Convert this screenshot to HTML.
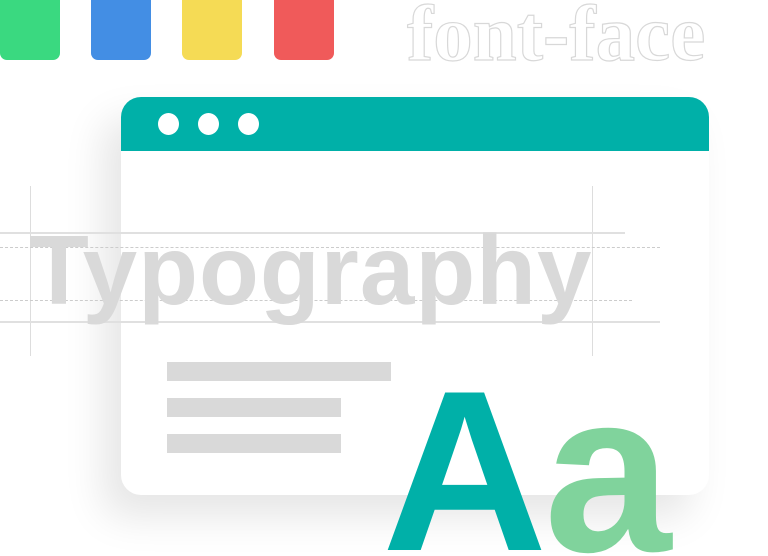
<!DOCTYPE html>
<html><head><meta charset="utf-8"><style>
html,body{margin:0;padding:0;width:768px;height:556px;overflow:hidden;background:#fff;position:relative}
.a{position:absolute}
.sq{position:absolute;top:-8px;width:60px;height:68px;border-radius:7px}
.t{position:absolute;white-space:nowrap;line-height:1}
#wrap{position:absolute;left:0;top:0;width:768px;height:556px;overflow:hidden}
</style></head><body><div id="wrap">
<div class="sq" style="left:0;background:#3ad980"></div>
<div class="sq" style="left:91px;background:#438ee4"></div>
<div class="sq" style="left:182px;background:#f5db55"></div>
<div class="sq" style="left:274px;background:#f05a5a"></div>
<div class="t" style="left:407px;top:-10px;font:bold 79px 'Liberation Serif',serif;color:#fff;-webkit-text-stroke:1.2px #d8d8d8">font-face</div>

<div class="a" style="left:121px;top:97px;width:588px;height:398px;border-radius:20px;background:#fff;box-shadow:-18px 22px 40px rgba(0,0,0,0.10)"></div>
<div class="a" style="left:121px;top:97px;width:588px;height:54px;border-radius:20px 20px 0 0;background:#00b0a8"></div>
<div class="a" style="left:158px;top:113px;width:21px;height:22px;border-radius:50%;background:#fff"></div>
<div class="a" style="left:198px;top:113px;width:21px;height:22px;border-radius:50%;background:#fff"></div>
<div class="a" style="left:238px;top:113px;width:21px;height:22px;border-radius:50%;background:#fff"></div>

<div class="a" style="left:167px;top:362px;width:224px;height:19px;background:#d9d9d9"></div>
<div class="a" style="left:167px;top:398px;width:174px;height:19px;background:#d9d9d9"></div>
<div class="a" style="left:167px;top:434px;width:174px;height:19px;background:#d9d9d9"></div>

<div class="a" style="left:30px;top:186px;width:1px;height:170px;background:#ddd"></div>
<div class="a" style="left:592px;top:186px;width:1px;height:170px;background:#ddd"></div>
<div class="a" style="left:0;top:232px;width:625px;height:2px;background:#e0e0e0"></div>
<div class="a" style="left:0;top:321px;width:660px;height:2px;background:#e0e0e0"></div>
<div class="a" style="left:0;top:247px;width:660px;height:0;border-top:1px dashed #ccc"></div>
<div class="a" style="left:0;top:300px;width:632px;height:0;border-top:1px dashed #ccc"></div>
<div class="t" style="left:29px;top:214px;font:bold 98px 'Liberation Sans',sans-serif;letter-spacing:1px;color:#d9d9d9">Typography</div>

<div class="t" style="left:382px;top:340px;font:bold 229px 'Liberation Sans',sans-serif;color:#00b0a8">A</div>
<div class="t" style="left:544px;top:341px;font:bold 229px 'Liberation Sans',sans-serif;color:#80d39c">a</div>
</div></body></html>
